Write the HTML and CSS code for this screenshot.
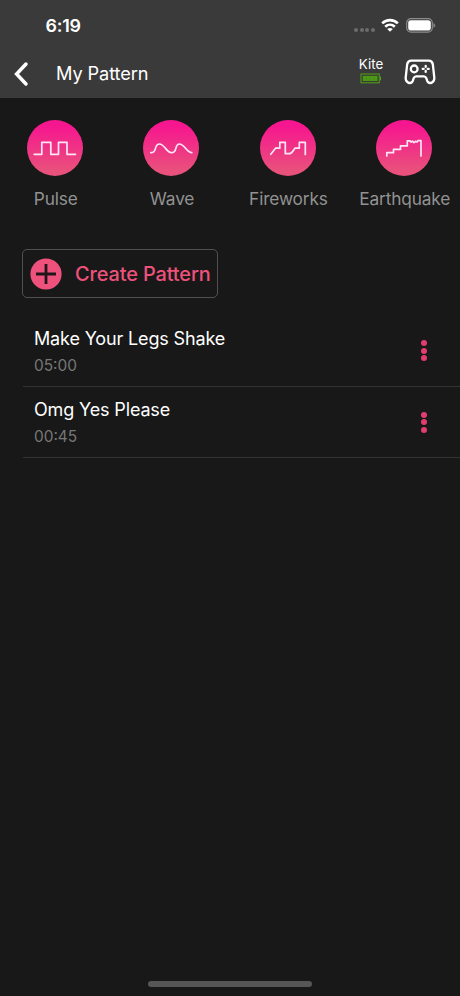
FILE: index.html
```html
<!DOCTYPE html>
<html lang="en">
<head>
<meta charset="utf-8">
<title>My Pattern</title>
<link rel="stylesheet" href="styles.css">
</head>
<body>
<div class="screen">
  <header class="header">
    <div class="status">
      <span class="time">6:19</span>
      <span class="signal"><i></i><i></i><i></i><i></i></span>
      <svg class="wifi" width="18" height="14" viewBox="0 0 18 14" fill="none" stroke="#fff" stroke-width="2.600"><path d="M1.200 5.300C5.500 1 12.500 1 16.800 5.300"/><path d="M4.200 8.700C7 6 11 6 13.800 8.700"/><path d="M9 13.700L6.200 11Q9 8.800 11.800 11Z" fill="#fff" stroke="none"/></svg>
      <svg class="phone-battery" width="30" height="15" viewBox="0 0 30 15"><rect x=".7" y=".7" width="25.600" height="13.400" rx="4.300" fill="none" stroke="#8d8d8d" stroke-width="1.200"/><rect x="2.200" y="2.200" width="22.600" height="10.400" rx="2.800" fill="#fff"/><path d="M27.500 5q1.600.8 1.600 2.500t-1.600 2.500z" fill="#8d8d8d"/></svg>
    </div>
    <div class="nav">
      <svg class="back" width="16" height="26" viewBox="0 0 16 26" fill="none" stroke="#fff" stroke-width="3.500" stroke-linecap="round" stroke-linejoin="miter"><path d="M13 3L3.600 13L13 23"/></svg>
      <h1 class="title">My Pattern</h1>
      <div class="device">
        <span class="device-name">Kite</span>
        <svg width="22" height="11" viewBox="0 0 22 11"><rect x="1" y="1" width="18.300" height="8.800" fill="none" stroke="#4f9b18" stroke-width="1.100"/><rect x="2.800" y="2.800" width="14.700" height="5.200" fill="#4c9a13"/><path d="M6.500 2.800v5.200M10.200 2.800v5.200M13.900 2.800v5.200" stroke="#457f20" stroke-width=".5"/><path d="M19.800 3.500h1.300v3.800h-1.300z" fill="#4f9b18"/></svg>
      </div>
      <svg class="gamepad" width="32" height="26" viewBox="0 0 32 26" fill="none" stroke="#fff" stroke-width="2.300" stroke-linecap="round" stroke-linejoin="round"><path d="M7.200 1.600H24.800Q28.200 1.600 28.800 5.200L30.300 18.500C30.700 23.800 25.400 25.600 23.400 22.300L22.300 19.200Q21.600 17.400 19.800 17.400H12.200Q10.400 17.400 9.700 19.200L8.600 22.300C6.600 25.600 1.300 23.800 1.700 18.500L3.200 5.200Q3.800 1.600 7.200 1.600Z"/><circle cx="10.200" cy="9.900" r="3.400"/><path d="M21.700 6.900V7.900M21.700 11.900V12.900M18.700 9.900H19.700M23.700 9.900H24.700" stroke-width="2.300"/></svg>
    </div>
  </header>

  <main>
    <section class="presets">
      <div class="preset"><div class="disc"><svg width="56" height="56" viewBox="0 0 56 56"><path d="M7.200 34.300H14.800V22.300H23.800V34.300H31.500V22.300H40V34.300H48.500"/></svg></div><span>Pulse</span></div>
      <div class="preset"><div class="disc"><svg width="56" height="56" viewBox="0 0 56 56"><path d="M7.800 32.700C14.500 33.300 10.500 24 16.500 24C21.500 24 23.500 32.700 28.500 32.700C35 32.700 31 24 36.500 24C41.500 24 43.500 32.500 48.800 32.700"/></svg></div><span>Wave</span></div>
      <div class="preset"><div class="disc"><svg width="56" height="56" viewBox="0 0 56 56"><path d="M10.800 34.300L15.500 28.200H19.800V22.300H25.300V33.700H29Q31.500 33.700 33 31L35 28.200H39.300V22.300H45.300V34.500"/></svg></div><span>Fireworks</span></div>
      <div class="preset"><div class="disc"><svg width="56" height="56" viewBox="0 0 56 56"><path d="M10.800 36V32.700H17.500V29.300H24.500V25.800H31.300V20.800H34L35.200 22.100L36.500 21.100L38 22.600L39.500 21.300L41 22.100L42 20.600H45V36"/></svg></div><span>Earthquake</span></div>
    </section>

    <button class="create" type="button">
      <svg width="32" height="32" viewBox="0 0 32 32"><circle cx="16" cy="16" r="15.600" fill="#ee527c"/><path d="M6 16H26M16 6V26" stroke="#211519" stroke-width="2.800"/></svg>
      <span>Create Pattern</span>
    </button>

    <ul class="list">
      <li class="row">
        <div class="info"><span class="name">Make Your Legs Shake</span><span class="length">05:00</span></div>
        <span class="more"><i></i><i></i><i></i></span>
      </li>
      <li class="row">
        <div class="info"><span class="name">Omg Yes Please</span><span class="length">00:45</span></div>
        <span class="more"><i></i><i></i><i></i></span>
      </li>
    </ul>
  </main>
  <div class="home-bar"></div>
</div>
</body>
</html>
```
FILE: styles.css
```css
* { box-sizing: border-box; }
body { margin: 0; background: #181818; color: #fff; font-family: Inter, "Liberation Sans", sans-serif; }
svg { display: block; flex: none; }
.screen { width: 460px; height: 996px; display: flex; flex-direction: column; overflow: hidden; }
.header { height: 98px; background: #3a3a3a; flex: none; }
.status { height: 50px; padding: 0 24px 0 45.500px; display: flex; align-items: center; }
.time { font-size: 17.900px; font-weight: 600; line-height: 20px; letter-spacing: -.2px; margin: 2px auto 0 0; }
.signal { display: flex; gap: 1.700px; margin: 10px 6px 0 0; }
.signal i { width: 4px; height: 4px; border-radius: 50%; background: #6c6c6c; }
.wifi { margin-right: 7px; }
.nav { height: 48px; display: flex; align-items: center; padding: 0 24px 0 13px; }
.back { margin-right: 27px; }
.title { margin: -2px auto 0 0; font-size: 18.200px; line-height: 24px; font-weight: 400; letter-spacing: -.1px; }
.device { width: 26px; display: flex; flex-direction: column; align-items: center; margin: -8px 20px 0 0; }
.device-name { font-size: 13.300px; line-height: 17px; white-space: nowrap; }
.gamepad { margin-top: -4px; }
.presets { display: flex; justify-content: space-between; padding: 22px 28px 0 27px; }
.preset { width: 56px; display: flex; flex-direction: column; align-items: center; color: #929292; font-size: 17.300px; line-height: 22px; letter-spacing: -.15px; white-space: nowrap; }
.preset span { padding-left: 1.500px; }
.disc { width: 56px; height: 56px; border-radius: 50%; background: linear-gradient(#f6168f 10%, #e9507c 90%); margin-bottom: 12px; }
.disc path { fill: none; stroke: #ffe6f5; stroke-width: 1.700; stroke-linejoin: round; stroke-linecap: round; }
.create { margin: 39px 0 0 22px; width: 196px; height: 49px; padding: 0 0 0 7px; display: flex; align-items: center; gap: 13px; border: 1px solid #505050; border-radius: 5px; background: none; color: #ee527c; font: 500 19.900px/24px Inter, sans-serif; letter-spacing: -.1px; white-space: nowrap; }
.list { list-style: none; margin: 17px 0 0 23px; padding: 0; }
.row { height: 71.500px; border-bottom: 1px solid #323232; display: flex; align-items: center; padding: 0 33px 0 11px; }
.info { display: flex; flex-direction: column; margin: 1px auto 0 0; }
.name { font-size: 18px; line-height: 26px; letter-spacing: -.15px; }
.length { font-size: 15.400px; line-height: 20px; color: #777; margin-top: 4px; }
.more { display: flex; flex-direction: column; gap: 1.700px; margin-top: 1px; }
.more i { width: 6px; height: 6px; border-radius: 50%; background: #e23d70; }
.home-bar { width: 164px; height: 6px; border-radius: 3px; background: #565656; margin: auto auto 9px 148px; flex: none; }
```
